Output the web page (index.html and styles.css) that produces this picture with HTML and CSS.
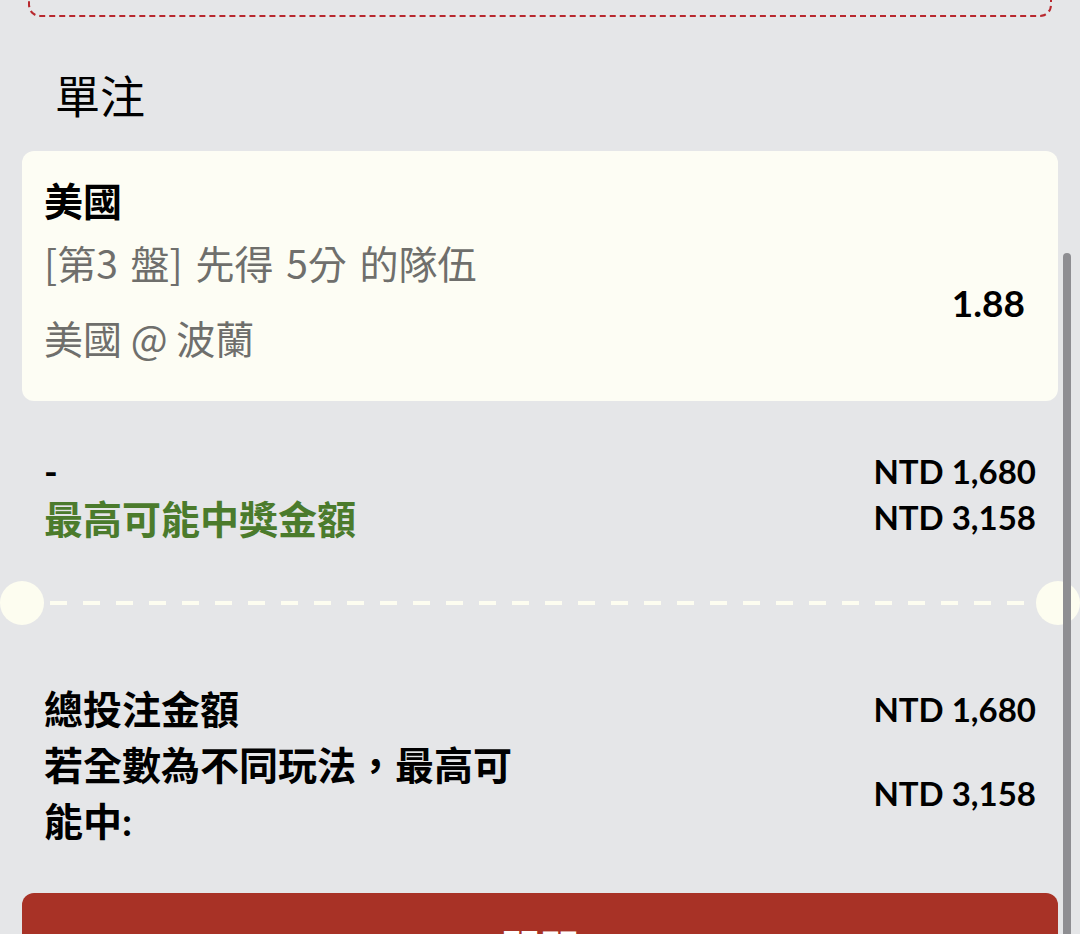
FILE: index.html
```html
<!DOCTYPE html>
<html lang="zh-Hant">
<head>
    <meta charset="UTF-8">
    <meta name="viewport" content="width=device-width, initial-scale=1.0">
    <title>單注</title>
    <link rel="stylesheet" href="styles.css">
</head>
<body>
    <div class="prev-box"></div>

    <h2 class="section-title">單注</h2>

    <div class="bet-card">
        <div class="bet-team">美國</div>
        <div class="bet-row">
            <div class="bet-info">
                <div class="bet-market">[第3 盤] 先得 5分 的隊伍</div>
                <div class="bet-match">美國 @ 波蘭</div>
            </div>
            <div class="bet-odds">1.88</div>
        </div>
    </div>

    <div class="amounts">
        <div class="amount-label">-</div>
        <div class="amount-value">NTD 1,680</div>
        <div class="amount-label win">最高可能中獎金額</div>
        <div class="amount-value">NTD 3,158</div>
    </div>

    <div class="divider">
        <span class="notch"></span>
        <span class="dash-line"></span>
        <span class="notch"></span>
    </div>

    <div class="totals">
        <div class="total-label">總投注金額</div>
        <div class="total-value">NTD 1,680</div>
        <div class="total-label">若全數為不同玩法，最高可能中:</div>
        <div class="total-value">NTD 3,158</div>
    </div>

    <div class="submit-btn">關閉</div>

    <div class="scrollbar"></div>
</body>
</html>
```

FILE: styles.css
```css
body {
    margin: 0;
    background: #e5e6e8;
    font-family: Lato, "Noto Sans CJK TC", sans-serif;
    color: #000;
    overflow: hidden;
}
.prev-box {
    box-sizing: border-box;
    height: 40px;
    margin: -23px 28px 0 28px;
    border: 2px dashed #b8282e;
    border-top: none;
    border-radius: 0 0 12px 12px;
}
.section-title {
    margin: 50px 0 0 55px;
    font-family: "Noto Sans CJK TC", sans-serif;
    font-size: 45px;
    font-weight: 400;
    line-height: 56px;
}
.bet-card {
    margin: 28px 22px 0 22px;
    padding: 23px 33px 39px 22px;
    background: #fdfdf4;
    border-radius: 12px;
}
.bet-team {
    font-family: "Noto Sans CJK TC", sans-serif;
    font-size: 39px;
    font-weight: 700;
    line-height: 50px;
}
.bet-row {
    display: flex;
    align-items: center;
    justify-content: space-between;
    margin-top: 13px;
}
.bet-market,
.bet-match {
    font-family: "Noto Sans CJK TC", sans-serif;
    font-size: 39px;
    line-height: 50px;
    color: #6f6f6c;
}
.bet-market {
    word-spacing: 4px;
}
.bet-match {
    margin-top: 25px;
}
.bet-odds {
    padding-top: 6px;
    font-size: 37px;
    font-weight: 700;
}
.amounts {
    display: grid;
    grid-template-columns: 1fr auto;
    margin: 47px 22px 0 22px;
    padding: 0 22px;
    line-height: 46px;
}
.amount-label {
    font-size: 37px;
    font-weight: 700;
}
.amount-label.win {
    font-family: "Noto Sans CJK TC", sans-serif;
    font-size: 39px;
    color: #4b7b2c;
}
.amount-value,
.total-value {
    font-size: 33px;
    font-weight: 700;
    text-align: right;
}
.divider {
    display: flex;
    align-items: center;
    margin-top: 41px;
}
.notch {
    width: 44px;
    height: 44px;
    border-radius: 50%;
    background: #fdfdf0;
    flex: none;
}
.dash-line {
    flex: 1;
    height: 4px;
    margin: 0 6px;
    background: repeating-linear-gradient(90deg, #fdfdf0 0 17px, transparent 17px 33px);
}
.totals {
    display: grid;
    grid-template-columns: 490px 1fr;
    align-items: center;
    margin: 56px 22px 0 22px;
    padding: 0 22px;
    line-height: 56px;
}
.total-label {
    font-size: 39px;
    font-weight: 700;
}
.submit-btn {
    margin: 44px 22px 0 22px;
    height: 90px;
    padding-top: 28px;
    box-sizing: border-box;
    background: #a83226;
    border-radius: 12px;
    color: #fff;
    font-family: "Noto Sans CJK TC", sans-serif;
    font-size: 39px;
    font-weight: 700;
    text-align: center;
    line-height: 50px;
}
.scrollbar {
    position: fixed;
    top: 253px;
    bottom: 0;
    right: 9px;
    width: 8px;
    background: #8e8e92;
    border-radius: 4px 4px 0 0;
}
```
